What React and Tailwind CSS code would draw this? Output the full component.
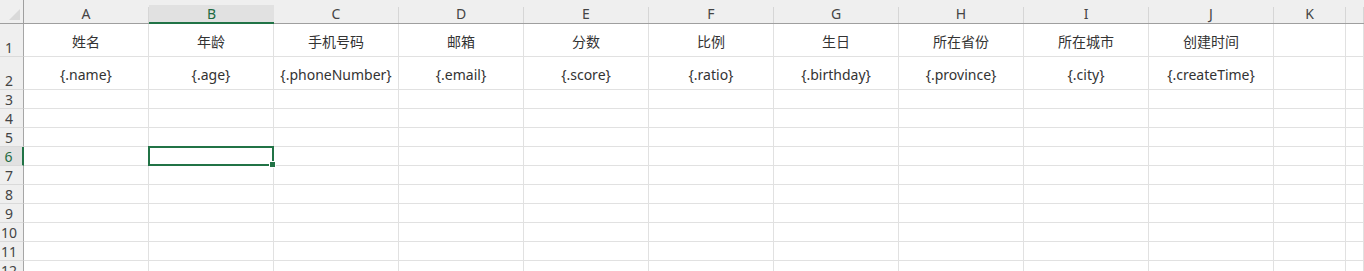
import React from 'react';

// Spreadsheet template view: column letters, row numbers, two header rows of fields
const COLUMNS = ['A', 'B', 'C', 'D', 'E', 'F', 'G', 'H', 'I', 'J', 'K', ''];

const TITLES = ['姓名', '年龄', '手机号码', '邮箱', '分数', '比例', '生日', '所在省份', '所在城市', '创建时间', '', ''];
const FIELDS = ['{.name}', '{.age}', '{.phoneNumber}', '{.email}', '{.score}', '{.ratio}', '{.birthday}', '{.province}', '{.city}', '{.createTime}', '', ''];

const ROWS = [
  { n: 1, h: 'h-[33px]', cells: TITLES },
  { n: 2, h: 'h-[33px]', cells: FIELDS },
  ...Array.from({ length: 10 }, (_, i) => ({ n: i + 3, h: 'h-[19px]', cells: Array(12).fill('') })),
];

const SEL_ROW = 6;
const SEL_COL = 1;

const ColumnHeader = ({ letter, active }) => {
  if (active) {
    return (
      <div className="h-6 flex flex-col bg-[#efefef]">
        <div className="h-[5px] shrink-0" />
        <div className="h-[17px] shrink-0 flex items-center justify-center bg-[#e1e1e1] text-[14px] leading-none text-[#1f6b43]">
          {letter}
        </div>
        <div className="h-[2px] shrink-0 bg-[#217346]" />
      </div>
    );
  }
  return (
    <div className="h-6 flex bg-[#efefef] border-b border-[#9f9f9f]">
      <div className="flex-1 flex items-center justify-center text-[14px] leading-none text-[#444] pt-[4px]">{letter}</div>
      <div className="w-px mt-[7px] bg-[#d6d6d6]" />
    </div>
  );
};

const RowHeader = ({ n, h, active }) => (
  <div
    className={`${h} flex items-end justify-center pr-[5px] leading-none text-[14px] border-b border-[#dadada] ${
      active ? 'bg-[#e1e1e1] text-[#1f6b43] border-r-2 border-r-[#217346]' : 'bg-[#efefef] text-[#444] border-r border-r-[#a6a6a6]'
    }`}
  >
    <span className="pb-[1px]">{n}</span>
  </div>
);

export default function App() {
  return (
    <div
      className="w-[1364px] h-[271px] overflow-hidden bg-white select-none"
      style={{ fontFamily: '"Noto Sans", "Noto Sans CJK SC", sans-serif' }}
    >
      <div className="grid grid-cols-[24px_repeat(10,125px)_72px_1fr]">
        {/* corner */}
        <div className="h-6 bg-[#efefef] border-b border-r border-[#9f9f9f] flex items-end justify-end pr-[3px] pb-[3px]">
          <svg width="11" height="11" viewBox="0 0 11 11">
            <polygon points="11,0 11,11 0,11" fill="#d9d9d9" />
          </svg>
        </div>
        {COLUMNS.map((c, i) => (
          <ColumnHeader key={i} letter={c} active={i === SEL_COL} />
        ))}

        {ROWS.map((row) => (
          <React.Fragment key={row.n}>
            <RowHeader n={row.n} h={row.h} active={row.n === SEL_ROW} />
            {row.cells.map((text, ci) => {
              const selected = row.n === SEL_ROW && ci === SEL_COL;
              return (
                <div
                  key={ci}
                  className={`${row.h} ${selected ? 'relative z-10' : ''} flex items-center justify-center pt-[3px] border-r border-b border-[#e1e1e1] text-[14px] text-[#333] whitespace-nowrap`}
                >
                  {text}
                  {selected && (
                    <div className="absolute -left-px -top-px -right-px -bottom-px border-2 border-[#217346]">
                      <div className="absolute -right-[4px] -bottom-[4px] w-[7px] h-[7px] bg-[#217346] border border-white" />
                    </div>
                  )}
                </div>
              );
            })}
          </React.Fragment>
        ))}
      </div>
    </div>
  );
}
